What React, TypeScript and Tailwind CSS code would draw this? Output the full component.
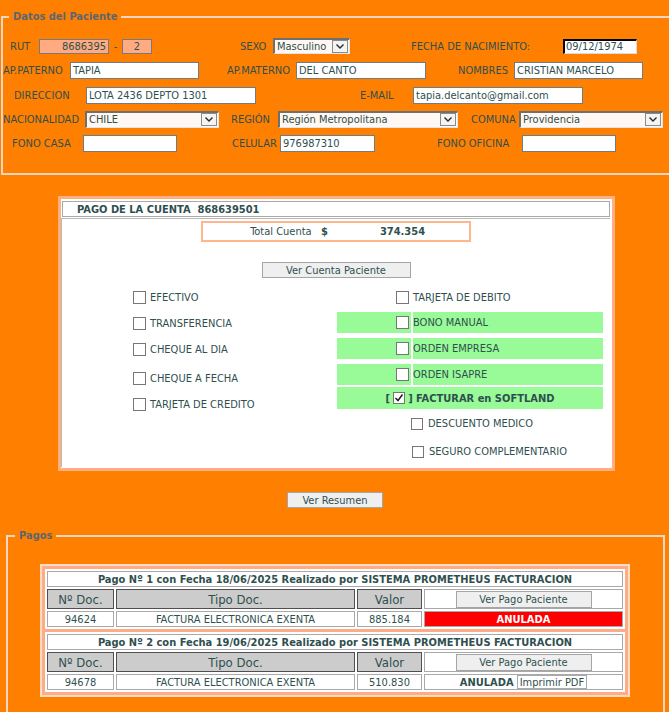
import type { ReactNode } from "react";

function Field({
  w,
  h = 17,
  children,
  className = "",
}: {
  w: string;
  h?: number;
  children?: ReactNode;
  className?: string;
}) {
  return (
    <div
      className={`${w} ${h === 17 ? "h-[17px]" : h === 15 ? "h-[15px]" : "h-[16px]"} flex shrink-0 items-center overflow-hidden whitespace-nowrap border border-[#727a82] px-[2px] ${className}`}
    >
      {children}
    </div>
  );
}

function Select({ w, value, h = 17 }: { w: string; value: string; h?: number }) {
  return (
    <div
      className={`${w} ${h === 17 ? "h-[17px]" : "h-[16px]"} flex shrink-0 items-center justify-between border-t-2 border-l-2 border-b border-r border-t-[#6f6f6f] border-l-[#6f6f6f] border-b-[#e5e5e5] border-r-[#e5e5e5] bg-[#fff7f1] pl-[2px]`}
    >
      <span className="whitespace-nowrap">{value}</span>
      <span className="mr-[1px] flex h-[13px] w-[16px] items-center justify-center border border-[#8a8a8a] bg-[#f4f4f4]">
        <svg width="10" height="7" viewBox="0 0 10 7">
          <polyline points="1.5,1.5 5,5 8.5,1.5" fill="none" stroke="#2a2a2a" strokeWidth="1.4" />
        </svg>
      </span>
    </div>
  );
}

function Checkbox({ checked = false, size = "w-[13px] h-[13px]" }: { checked?: boolean; size?: string }) {
  return (
    <span className={`${size} flex shrink-0 items-center justify-center border border-[#767676] bg-white`}>
      {checked && (
        <svg width="10" height="10" viewBox="0 0 10 10">
          <polyline points="1.5,5 4,7.5 8.5,1.5" fill="none" stroke="#222" strokeWidth="1.5" />
        </svg>
      )}
    </span>
  );
}

function Label({ w, children, className = "" }: { w: string; children: ReactNode; className?: string }) {
  return <div className={`${w} shrink-0 whitespace-nowrap ${className}`}>{children}</div>;
}

function PagoTable({
  n,
  fecha,
  doc,
  valor,
  anuladaRed,
}: {
  n: number;
  fecha: string;
  doc: string;
  valor: string;
  anuladaRed: boolean;
}) {
  const cell = "flex items-center justify-center border border-[#a9a9a9] bg-white";
  const head = "flex items-center justify-center border border-[#4f4f4f] bg-[#cccccc] text-[13px]";
  return (
    <div className="bg-white p-[2px]">
      <div className={`${cell} h-[16px] font-bold`}>
        Pago Nº {n} con Fecha {fecha} Realizado por SISTEMA PROMETHEUS FACTURACION
      </div>
      <div className="mt-[2px] grid h-[20px] grid-cols-[67px_239px_65px_199px] gap-x-[2px]">
        <div className={head}>Nº Doc.</div>
        <div className={head}>Tipo Doc.</div>
        <div className={head}>Valor</div>
        <div className={cell}>
          <div className="flex h-[17px] w-[136px] items-center justify-center border border-[#a5a5a5] bg-[#efefef]">
            Ver Pago Paciente
          </div>
        </div>
      </div>
      <div className="mt-[2px] grid h-[16px] grid-cols-[67px_239px_65px_199px] gap-x-[2px]">
        <div className={cell}>{doc}</div>
        <div className={cell}>FACTURA ELECTRONICA EXENTA</div>
        <div className={cell}>{valor}</div>
        {anuladaRed ? (
          <div className="flex items-center justify-center border border-[#a9a9a9] bg-[#ff0000] font-bold text-white">
            ANULADA
          </div>
        ) : (
          <div className={`${cell} gap-[3px]`}>
            <span className="font-bold">ANULADA</span>
            <span className="flex h-[14px] items-center border border-[#a9a9a9] bg-white px-[2px]">Imprimir PDF</span>
          </div>
        )}
      </div>
    </div>
  );
}

export default function App() {
  return (
    <div className="min-h-[712px] w-full overflow-hidden bg-[#ff8000] pb-[20px] text-[11px] leading-[13px] text-[#2f4f4f] [font-family:'DejaVu_Sans_Condensed','DejaVu_Sans',sans-serif]">
      {/* Datos del Paciente */}
      <fieldset className="ml-[1px] mt-[10px] w-[720px] border-2 border-[#f1d6c3] pb-[18px] pt-[11px]">
        <legend className="ml-[6px] px-[4px] font-bold text-[#5d6670]">Datos del Paciente</legend>

        <div className="flex h-[24px] items-center pl-[7px]">
          <Label w="w-[29px]">RUT</Label>
          <Field w="w-[70px]" h={15} className="justify-end bg-[#ffaa80]">8686395</Field>
          <div className="w-[13px] shrink-0 text-center">-</div>
          <Field w="w-[30px]" h={15} className="justify-center bg-[#ffaa80]">2</Field>
          <Label w="w-[33px]" className="ml-[88px]">SEXO</Label>
          <Select w="w-[77px]" value="Masculino" h={16} />
          <Label w="w-[152px]" className="ml-[61px]">FECHA DE NACIMIENTO:</Label>
          <div className="flex h-[15px] w-[74px] shrink-0 items-center border-t-2 border-l-2 border-b border-r border-t-black border-l-black border-b-[#dcdcdc] border-r-[#dcdcdc] bg-white pl-[1px]">
            09/12/1974
          </div>
        </div>

        <div className="flex h-[24px] items-center">
          <Label w="w-[67px]">AP.PATERNO</Label>
          <Field w="w-[129px]" className="bg-white">TAPIA</Field>
          <Label w="w-[69px]" className="ml-[28px]">AP.MATERNO</Label>
          <Field w="w-[130px]" className="bg-white">DEL CANTO</Field>
          <Label w="w-[56px]" className="ml-[32px]">NOMBRES</Label>
          <Field w="w-[129px]" className="bg-white">CRISTIAN MARCELO</Field>
        </div>

        <div className="mt-[1px] flex h-[24px] items-center">
          <Label w="w-[72px]" className="ml-[11px]">DIRECCION</Label>
          <Field w="w-[170px]" className="bg-white">LOTA 2436 DEPTO 1301</Field>
          <Label w="w-[53px]" className="ml-[104px]">E-MAIL</Label>
          <Field w="w-[170px]" className="bg-white">tapia.delcanto@gmail.com</Field>
        </div>

        <div className="flex h-[24px] items-center">
          <Label w="w-[82px]">NACIONALIDAD</Label>
          <Select w="w-[134px]" value="CHILE" />
          <Label w="w-[47px]" className="ml-[12px]">REGIÓN</Label>
          <Select w="w-[180px]" value="Región Metropolitana" />
          <Label w="w-[48px]" className="ml-[13px]">COMUNA</Label>
          <Select w="w-[144px]" value="Providencia" />
        </div>

        <div className="flex h-[24px] items-center">
          <Label w="w-[71px]" className="ml-[9px]">FONO CASA</Label>
          <Field w="w-[94px]" className="bg-white" />
          <Label w="w-[48px]" className="ml-[55px]">CELULAR</Label>
          <Field w="w-[95px]" className="bg-white">976987310</Field>
          <Label w="w-[85px]" className="ml-[62px]">FONO OFICINA</Label>
          <Field w="w-[94px]" className="bg-white" />
        </div>
      </fieldset>

      {/* Pago de la cuenta */}
      <div className="ml-[58px] mt-[21px] h-[275px] w-[557px] border-[3px] border-[#ffb083] bg-white pl-[1px] pr-[2px] pt-[2px]">
        <div className="flex h-[16px] items-center border border-[#a9a9a9] pl-[14px] font-bold">
          PAGO DE LA CUENTA&nbsp;&nbsp;868639501
        </div>
        <div className="-ml-[1px] mt-[1px] h-[249px] border-l border-t border-[#b9b9b9]">
          <div className="mx-auto mt-[2px] flex h-[21px] w-[270px] items-center border-2 border-[#ffb58e]">
            <div className="w-1/2 pr-[8px] text-right">
              Total Cuenta&nbsp;&nbsp;&nbsp;<b>$</b>
            </div>
            <div className="w-1/2 text-center font-bold">374.354</div>
          </div>

          <div className="mx-auto mt-[20px] flex h-[16px] w-[149px] items-center justify-center border border-[#a5a5a5] bg-[#efefef]">
            Ver Cuenta Paciente
          </div>

          <div className="mt-[6px] flex">
            <div className="ml-[71px] w-[204px] shrink-0">
              {[
                ["EFECTIVO", "h-[26px]"],
                ["TRANSFERENCIA", "h-[27px]"],
                ["CHEQUE AL DIA", "h-[24px]"],
                ["CHEQUE A FECHA", "h-[34px]"],
                ["TARJETA DE CREDITO", "h-[18px]"],
              ].map(([label, h]) => (
                <div key={label} className={`${h} flex items-center gap-[4px]`}>
                  <Checkbox />
                  <span>{label}</span>
                </div>
              ))}
            </div>

            <div className="w-[266px] shrink-0">
              <div className="flex h-[26px] items-center">
                <div className="flex w-[74px] justify-end pr-[2px]">
                  <Checkbox />
                </div>
                <div className="ml-[2px]">TARJETA DE DEBITO</div>
              </div>
              {["BONO MANUAL", "ORDEN EMPRESA", "ORDEN ISAPRE"].map((label, i) => (
                <div key={label} className={`${i === 0 ? "mt-[2px]" : "mt-[5px]"} flex h-[21px]`}>
                  <div className="flex w-[74px] items-center justify-end bg-[#98fb98] pr-[2px]">
                    <Checkbox />
                  </div>
                  <div className="ml-[2px] flex flex-1 items-center bg-[#98fb98]">{label}</div>
                </div>
              ))}
              <div className="mt-[2px] flex h-[22px] items-center justify-center gap-[3px] bg-[#98fb98] font-bold">
                <span>[</span>
                <Checkbox checked size="w-[12px] h-[12px]" />
                <span>] FACTURAR en SOFTLAND</span>
              </div>
              <div className="mt-[4px] flex h-[21px] items-center gap-[5px] pl-[74px]">
                <Checkbox size="w-[12px] h-[12px]" />
                <span>DESCUENTO MEDICO</span>
              </div>
              <div className="mt-[7px] flex h-[21px] items-center gap-[5px] pl-[75px]">
                <Checkbox size="w-[12px] h-[12px]" />
                <span>SEGURO COMPLEMENTARIO</span>
              </div>
            </div>
          </div>
        </div>
      </div>

      <div className="ml-[287px] mt-[21px] flex h-[16px] w-[96px] items-center justify-center border border-[#a5a5a5] bg-[#efefef]">
        Ver Resumen
      </div>

      {/* Pagos */}
      <fieldset className="ml-[6px] mt-[21px] h-[200px] w-[659px] border-2 border-[#f1d6c3] pt-[22px]">
        <legend className="ml-[7px] px-[4px] font-bold text-[#5d6670]">Pagos</legend>
        <div className="ml-[32px] w-[590px] border-2 border-[#ffdcc6] bg-[#ffab86] p-[3px]">
          <PagoTable n={1} fecha="18/06/2025" doc="94624" valor="885.184" anuladaRed />
          <div className="mt-[3px]">
            <PagoTable n={2} fecha="19/06/2025" doc="94678" valor="510.830" anuladaRed={false} />
          </div>
        </div>
      </fieldset>
    </div>
  );
}
